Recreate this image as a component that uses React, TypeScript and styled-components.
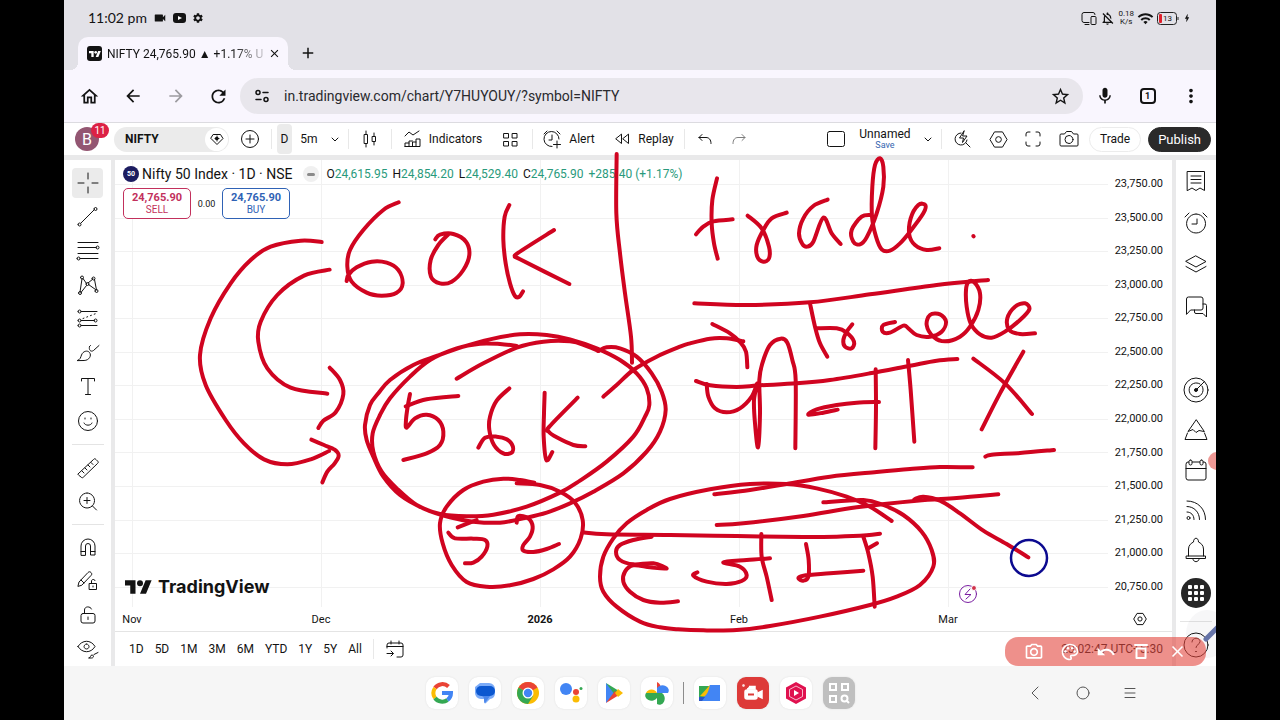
import React from "react";
import styled, { createGlobalStyle, css } from "styled-components";
import {
  MdVideocam,
  MdSettings,
  MdClose,
  MdAdd,
  MdOutlineHome,
  MdArrowBack,
  MdArrowForward,
  MdRefresh,
  MdStarBorder,
  MdMic,
  MdMoreVert,
  MdWifi,
  MdOutlineNotificationsOff,
  MdBolt,
  MdOutlinePalette,
  MdOutlineCameraAlt,
  MdUndo,
} from "react-icons/md";

const GlobalStyle = createGlobalStyle`
  * { box-sizing: border-box; }
  body { margin: 0; background: #000; font-family: Roboto, "Liberation Sans", sans-serif; color: #131313; }
  button { font: inherit; color: inherit; background: none; border: 0; padding: 0; cursor: pointer; }
  svg { display: block; flex: none; }
`;

/* ---------- shared ---------- */

const Icon = ({
  w,
  h = w,
  sw = 1,
  children,
}: {
  w: number;
  h?: number;
  sw?: number;
  children: React.ReactNode;
}) => (
  <svg
    width={w}
    height={h}
    viewBox={`0 0 ${w} ${h}`}
    fill="none"
    stroke="currentColor"
    strokeWidth={sw}
    strokeLinecap="round"
    strokeLinejoin="round"
    aria-hidden="true"
  >
    {children}
  </svg>
);

const Device = styled.div`
  position: relative;
  margin: 0 5%;
  min-height: 100vh;
  display: flex;
  flex-direction: column;
  overflow: hidden;
  background: #fff;
`;

/* ---------- status bar and tab strip ---------- */

const StatusBar = styled.div`
  display: flex;
  align-items: center;
  justify-content: space-between;
  height: 36px;
  padding: 0 24px;
  background: #e2e1e7;
`;

const Clock = styled.span`
  font: 14px/20px Lato, sans-serif;
`;

const StatusGroup = styled.div<{ $gap: number }>`
  display: flex;
  align-items: center;
  gap: ${(p) => p.$gap}px;
`;

const NetSpeed = styled.span`
  font-size: 8px;
  line-height: 8px;
  text-align: center;
`;

const TabStrip = styled.div`
  display: flex;
  height: 34px;
  padding-left: 14px;
  background: #e2e1e7;
`;

const Tab = styled.div`
  position: relative;
  display: flex;
  align-items: center;
  width: 210px;
  padding: 0 7px 0 9px;
  margin-top: 1px;
  border-radius: 10px 10px 0 0;
  background: #f9f6fe;
  &::before,
  &::after {
    content: "";
    position: absolute;
    bottom: 0;
    width: 8px;
    height: 8px;
  }
  &::before {
    left: -8px;
    background: radial-gradient(circle at 0 0, transparent 8px, #f9f6fe 8px);
  }
  &::after {
    right: -8px;
    background: radial-gradient(circle at 100% 0, transparent 8px, #f9f6fe 8px);
  }
`;

const Favicon = styled.span`
  display: grid;
  place-items: center;
  width: 15px;
  height: 15px;
  border-radius: 3px;
  background: #131313;
  color: #fff;
`;

const TabTitle = styled.span`
  flex: 1;
  margin: 0 4px 0 5px;
  white-space: nowrap;
  font-size: 12px;
  mask-image: linear-gradient(90deg, #000 80%, transparent 105%);
`;

const NewTab = styled.button`
  display: grid;
  place-items: center;
  width: 40px;
`;

/* ---------- address bar ---------- */

const AddressRow = styled.div`
  display: flex;
  align-items: center;
  height: 53px;
  padding: 0 4px;
  background: #f9f6fe;
  border-bottom: 1px solid #dcdbe0;
`;

const NavButton = styled.button<{ $muted?: boolean }>`
  display: grid;
  place-items: center;
  width: 43px;
  height: 40px;
  opacity: ${(p) => (p.$muted ? 0.4 : 1)};
`;

const Omnibox = styled.form`
  flex: 1;
  display: flex;
  align-items: center;
  height: 36px;
  padding: 0 12px 0 14px;
  border-radius: 18px;
  background: #e8e6ec;
`;

const UrlInput = styled.input`
  flex: 1;
  min-width: 0;
  margin-left: 14px;
  padding: 0;
  border: 0;
  outline: 0;
  background: none;
  color: #2a2a2e;
  font: 14px/20px Roboto, sans-serif;
`;

const TabCount = styled.span`
  display: grid;
  place-items: center;
  width: 16px;
  height: 16px;
  border: 2px solid #131313;
  border-radius: 4px;
  font-size: 9px;
  font-weight: 700;
`;

/* ---------- chart header ---------- */

const Header = styled.header`
  display: flex;
  align-items: center;
  height: 32px;
  font-size: 12px;
  background: #fff;
`;

const Slot = styled.button<{ $w: number; $muted?: boolean }>`
  display: flex;
  align-items: center;
  justify-content: center;
  width: ${(p) => p.$w}px;
  height: 30px;
  opacity: ${(p) => (p.$muted ? 0.55 : 1)};
`;

const LabelSlot = styled(Slot)`
  gap: 8px;
`;

const VLine = styled.span`
  width: 1px;
  height: 20px;
  background: #e8e8e8;
`;

const GroupLine = styled(VLine)`
  margin-left: 5px;
`;

const Avatar = styled.button`
  position: relative;
  width: 24px;
  height: 24px;
  margin: 0 15px 0 11px;
  border-radius: 50%;
  background: #935672;
  color: #fff;
  font-size: 16px;
`;

const Badge = styled.span`
  position: absolute;
  left: 16px;
  top: -4px;
  padding: 0 3px;
  min-width: 18px;
  border-radius: 8px;
  background: #dc2145;
  font-size: 10px;
  line-height: 15px;
`;

const SymbolSearch = styled.button`
  display: flex;
  align-items: center;
  justify-content: space-between;
  width: 115px;
  height: 25px;
  padding: 0 1px 0 11px;
  border-radius: 13px;
  background: #ebebeb;
  font-weight: 700;
`;

const RoundWhite = styled.span`
  display: grid;
  place-items: center;
  width: 23px;
  height: 23px;
  border-radius: 50%;
  background: #fff;
`;

const Interval = styled(Slot)`
  background: #ebebeb;
  border-radius: 4px;
  margin-left: 5px;
`;

const Spacer = styled.span`
  flex: 1;
`;

const LayoutName = styled.button`
  width: 60px;
  line-height: 12px;
  text-align: center;
  small {
    display: block;
    font-size: 9px;
    line-height: 10px;
    color: #3465b0;
  }
`;

const Pill = styled.button<{ $dark?: boolean }>`
  height: 25px;
  padding: 0 ${(p) => (p.$dark ? 9 : 10)}px;
  margin-right: ${(p) => (p.$dark ? 5 : 7)}px;
  border-radius: 13px;
  border: 1px solid ${(p) => (p.$dark ? "#2a2a2a" : "#ececec")};
  background: ${(p) => (p.$dark ? "#2a2a2a" : "#fff")};
  color: ${(p) => (p.$dark ? "#fff" : "#131313")};
  font-size: ${(p) => (p.$dark ? 13 : 12)}px;
`;

/* ---------- work area ---------- */

const Work = styled.main`
  flex: 1;
  display: flex;
  gap: 4px;
  padding-top: 5px;
  background: #e9e9ea;
`;

const sideBar = css`
  display: flex;
  flex-direction: column;
  align-items: center;
  background: #fff;
`;

const DrawBar = styled.nav`
  ${sideBar}
  width: 47px;
  padding-top: 6px;
`;

const Tool = styled.button<{ $active?: boolean }>`
  display: grid;
  place-items: center;
  width: 31px;
  height: 30px;
  margin: 2px 0;
  border-radius: 4px;
  background: ${(p) => (p.$active ? "#ebebeb" : "none")};
`;

const HLine = styled.span<{ $m: number }>`
  width: 32px;
  height: 1px;
  margin: ${(p) => p.$m}px 0;
  background: #e4e4e4;
`;

const WidgetBar = styled.nav`
  ${sideBar}
  width: 40px;
`;

const Widget = styled.button<{ $h: number; $gap?: number }>`
  display: grid;
  place-items: center;
  width: 40px;
  height: ${(p) => p.$h}px;
  margin-top: ${(p) => p.$gap ?? 0}px;
`;

const AppsDot = styled.span`
  display: grid;
  place-items: center;
  width: 30px;
  height: 30px;
  border-radius: 50%;
  background: #262626;
`;

const ChartPanel = styled.section`
  flex: 1;
  min-width: 0;
  display: flex;
  flex-direction: column;
  background: #fff;
`;

const PlotRow = styled.div`
  flex: 1;
  display: flex;
`;

const Plot = styled.div`
  position: relative;
  flex: 1;
  display: flex;
  flex-direction: column;
  justify-content: space-between;
  padding: 4px 9px 8px 8px;
`;

const GridLines = styled.svg`
  position: absolute;
  inset: 0;
  width: 100%;
  height: 100%;
`;

const Legend = styled.div`
  position: relative;
`;

const LegendRow = styled.div`
  display: flex;
  align-items: center;
  height: 20px;
  font-size: 12px;
  white-space: nowrap;
`;

const IndexLogo = styled.span`
  display: grid;
  place-items: center;
  width: 16px;
  height: 16px;
  margin-right: 3px;
  border-radius: 50%;
  background: #1c1c60;
  color: #fff;
  font-size: 7px;
  font-weight: 700;
`;

const SymbolTitle = styled.span`
  font-size: 14px;
`;

const StatusPill = styled.span`
  display: grid;
  place-items: center;
  width: 16px;
  height: 16px;
  margin: 0 7px 0 11px;
  border-radius: 8px;
  background: #f0f0f0;
  &::after {
    content: "";
    width: 8px;
    height: 3px;
    border-radius: 2px;
    background: #8a8a8a;
  }
`;

const Ohlc = styled.span`
  margin-right: 5px;
  b {
    font-weight: 400;
    color: #299a7c;
  }
`;

const OrderRow = styled.div`
  display: flex;
  align-items: center;
  margin-top: 4px;
`;

const OrderButton = styled.button<{ $color: string }>`
  width: 68px;
  height: 31px;
  border: 1px solid ${(p) => p.$color};
  border-radius: 5px;
  background: #fff;
  color: ${(p) => p.$color};
  font-size: 10px;
  line-height: 12px;
  strong {
    display: block;
    font-size: 11px;
  }
`;

const Spread = styled.span`
  width: 31px;
  text-align: center;
  font-size: 9px;
`;

const Brand = styled.div`
  position: relative;
  display: flex;
  align-items: center;
  gap: 6px;
  height: 24px;
  padding-left: 2px;
  font: 700 18px/24px Inter, sans-serif;
`;

const PriceAxis = styled.div`
  display: flex;
  flex-direction: column;
  justify-content: space-between;
  width: 64px;
  padding: 16px 9px 12px 0;
  text-align: right;
  font-size: 11px;
  line-height: 16px;
`;

const TimeRow = styled.div`
  display: flex;
  align-items: center;
  height: 25px;
  border-bottom: 1px solid #e4e4e4;
  font-size: 11px;
`;

const TimeAxis = styled.div`
  flex: 1;
  display: grid;
  grid-template-columns: 34fr 344fr 94fr 304fr 114fr 103fr;
  text-align: center;
`;

const AxisSettings = styled.button`
  display: grid;
  place-items: center;
  width: 64px;
`;

const RangeBar = styled.div`
  display: flex;
  align-items: center;
  gap: 11px;
  height: 34px;
  padding: 0 9px 0 14px;
  font-size: 12px;
`;

const RangeDivider = styled(VLine)`
  margin-right: 1px;
`;

/* ---------- floating screen recorder controls ---------- */

const RecorderBar = styled.div`
  position: absolute;
  right: 10px;
  bottom: 54px;
  display: flex;
  align-items: center;
  justify-content: space-between;
  width: 201px;
  height: 29px;
  padding: 0 19px;
  border-radius: 13px;
  background: rgba(226, 70, 62, 0.6);
  color: #fff;
`;

const RecorderButton = styled.button`
  display: grid;
  place-items: center;
  width: 20px;
  height: 24px;
`;

const EdgeHandle = styled.span`
  position: absolute;
  right: -10px;
  bottom: 250px;
  width: 18px;
  height: 18px;
  border-radius: 50%;
  background: rgba(226, 70, 62, 0.55);
`;

const PenHandle = styled.span`
  position: absolute;
  right: -12px;
  bottom: 62px;
  width: 42px;
  height: 48px;
  border-radius: 50%;
  background: rgba(120, 120, 140, 0.06);
`;

const EventFlag = styled.span`
  position: absolute;
  right: 238px;
  bottom: 116px;
  color: #7b1fa2;
`;

const Ink = styled.svg`
  position: absolute;
  inset: 0;
  width: 100%;
  height: 100%;
  pointer-events: none;
`;

/* ---------- system dock ---------- */

const Dock = styled.footer`
  display: grid;
  grid-template-columns: 1fr auto 1fr;
  align-items: center;
  height: 54px;
  background: #f6f6f6;
`;

const Apps = styled.div`
  grid-column: 2;
  display: flex;
  align-items: center;
  gap: 11px;
`;

const AppTile = styled.button<{ $bg?: string }>`
  display: grid;
  place-items: center;
  width: 32px;
  height: 32px;
  border-radius: 9px;
  background: ${(p) => p.$bg ?? "#fff"};
  box-shadow: 0 0 2px rgba(0, 0, 0, 0.1);
`;

const DockDivider = styled.span`
  width: 1px;
  height: 22px;
  margin: 0 -1px;
  background: #8c8c8c;
`;

const SystemNav = styled.div`
  display: flex;
  justify-content: flex-end;
  padding-right: 63px;
  color: #555;
`;

/* ---------- icons ---------- */

const TvMark = ({ w, h }: { w: number; h: number }) => (
  <svg width={w} height={h} viewBox="0 4 36 18" fill="currentColor" aria-hidden="true">
    <path d="M14 22H7V11H0V4h14v18zM28 22h-8l7.5-18h8L28 22z" />
    <circle cx="20" cy="8" r="4" />
  </svg>
);

const Hex = ({ s }: { s: number }) => (
  <svg width={s} height={s} viewBox="0 0 20 20" fill="none" stroke="currentColor" strokeWidth={20 / s} aria-hidden="true">
    <path d="M5.8 2h8.4L19 10l-4.8 8H5.8L1 10z" strokeLinejoin="round" />
    <circle cx="10" cy="10" r="3" />
  </svg>
);

const Chevron = () => (
  <Icon w={10}>
    <path d="M2 4l3 3 3-3" />
  </Icon>
);

const drawTools: [string, React.ReactNode][] = [
  ["Trend line", <path d="M5 18L18 5M2 19.500a1.500 1.500 0 1 0 3 0a1.500 1.500 0 1 0-3 0M18 4a1.500 1.500 0 1 0 3 0a1.500 1.500 0 1 0-3 0" />],
  ["Fib retracement", <path d="M2 3.500h20M2 8.500h18M2 14.500h20M4 19.500h18M20 8.500a1.500 1.500 0 1 0 3 0a1.500 1.500 0 1 0-3 0M1 19.500a1.500 1.500 0 1 0 3 0a1.500 1.500 0 1 0-3 0" />],
  ["Patterns", <path d="M4 19L6 6M7 5.500l3.500 5M12 10l5-4M18.500 6.500l2 10.500M5 19.500l5.500-7M12.500 11.500l7 5M4.500 4.500a1.500 1.500 0 1 0 3 0a1.500 1.500 0 1 0-3 0M16 5.500a1.500 1.500 0 1 0 3 0a1.500 1.500 0 1 0-3 0M10 11a1.500 1.500 0 1 0 3 0a1.500 1.500 0 1 0-3 0M2.500 20a1.500 1.500 0 1 0 3 0a1.500 1.500 0 1 0-3 0M19 18a1.500 1.500 0 1 0 3 0a1.500 1.500 0 1 0-3 0" />],
  ["Projection", <><path d="M5 4.500h16M5 13.500h13M5 18.500h16M2 4.500a1.500 1.500 0 1 0 3 0a1.500 1.500 0 1 0-3 0M2 13.500a1.500 1.500 0 1 0 3 0a1.500 1.500 0 1 0-3 0M18 13.500a1.500 1.500 0 1 0 3 0a1.500 1.500 0 1 0-3 0M2 18.500a1.500 1.500 0 1 0 3 0a1.500 1.500 0 1 0-3 0" /><path d="M7 11.500l13-5" strokeDasharray="1 3" /></>],
  ["Brush", <path d="M1.500 19.500c3-1 3-3 4-5.500 1.500-4 6-5 8-2.500 2.500 3-.5 8-5 8zM13.500 5.500c-1 3 1 6 4 4l5.500-5M13.500 5.500l1-1" />],
  ["Text", <path d="M5.500 6V3.500h13V6M12 3.500v16M9.500 19.500h5" />],
  ["Emoji", <><circle cx="12" cy="12" r="9.500" /><path d="M8 14c1 3 7 3 8 0M9 9v1M15 9v1" /></>],
];

const zoomTools: [string, React.ReactNode][] = [
  ["Measure", <path d="M2.500 17.500L17.500 3.500c1-1 1.500-1 2.500 0l1.500 1.500c1 1 1 1.500 0 2.500L7.500 21c-1 1-1.500 1-2.500 0l-2.500-2c-1-1-1-1 0-1.500zM6 15l2 2M9 12l2 2M12 9l2 2M15 6.500l2 2" />],
  ["Zoom in", <path d="M11 3a7.500 7.500 0 1 0 .1 0M11 7.500v6M8 10.500h6M16.500 16l4 4" />],
];

const lockTools: [string, React.ReactNode][] = [
  ["Magnet", <path d="M5 20V11a7 7 0 0 1 14 0v9h-4.500v-9a2.500 2.500 0 0 0-5 0v9zM5 16.500h4.500M14.500 16.500H19" />],
  ["Keep drawing", <path d="M2 17l1-4L12 3.500c1-1 2-1 3 0 1 1 1 2 0 3L6 16zM5 11l3 3M13.500 14.500h7v6h-7zM15.500 14.500V12c0-2 3.500-2 3.500-.500M17 17v1" />],
  ["Lock drawings", <path d="M7 10.500h10a2 2 0 0 1 2 2V18a2 2 0 0 1-2 2H7a2 2 0 0 1-2-2v-5.500a2 2 0 0 1 2-2zM8.500 10.500V7c0-4 6-4 7-1M12 14v2.500" />],
  ["Hide drawings", <path d="M2 9.500c4-7 13-7 17 0-4 7-13 7-17 0zM10.500 7a2.500 2.500 0 1 0 .1 0M13 21c2 0 1-3 3-3s2 3 0 3zM18 17.500l4-2" />],
];

const ToolIcon = ({ children }: { children: React.ReactNode }) => <Icon w={24}>{children}</Icon>;

/* ---------- ink: pen samples are recorded at three units per pixel ---------- */

type Sheet = { x: number; y: number; strokes: string[] };

const sheets: Sheet[] = [
  {
    x: 64,
    y: 155,
    strokes: [
      "773,261 710,257 620,275 560,315 500,385 440,490 408,600 425,690 485,795 540,865 600,913 670,928 740,913 795,888",
      "742,854 780,870 812,884 824,902 812,925 790,950 775,982",
      "797,344 720,362 640,420 590,500 583,560 610,640 680,698 790,716",
      "797,638 828,675 838,718 815,772 778,797 763,819",
    ],
  },
  {
    x: 340,
    y: 180,
    strokes: [
      "176,67 130,90 70,150 30,210 22,260 35,305 80,338 125,347 170,338 188,310 175,270 140,248 95,245 50,262 25,285 20,303",
      "286,178 300,164 340,162 378,185 388,225 370,270 335,305 300,310 273,290 272,240 295,195 325,163",
      "508,75 494,110 490,180 497,250 510,310 525,348 538,350 549,334",
      "642,150 535,218 528,230 540,238 688,312",
      "830,-78 829,100 840,220 855,340 873,470 876,548",
      "350,596 430,550 530,503 610,485 690,484 740,498 775,513",
      "775,513 800,502 840,505 890,530 935,580 965,635 977,690 960,755 920,815 850,880 760,935 690,970 620,998 550,1015 480,1028 400,1025 330,1012 250,985 180,945 130,890 100,830 80,780 75,735 90,675 115,640 150,600 220,555 290,528 370,500 450,478 540,463 620,465 690,478 770,505 840,540 890,580 920,625 928,675 915,710 880,770 800,845 720,902 660,938 560,980 460,1004 380,1009 300,1002 230,975 170,925 125,875 100,815 98,760 120,705 150,655 210,590 270,540 350,505 420,491 480,492 530,498",
      "790,650 830,615 880,570 950,530 1020,500 1050,490 1110,476 1160,475 1210,484",
    ],
  },
  {
    x: 340,
    y: 380,
    strokes: [
      "210,42 203,80 198,120 200,143 225,115 260,104 295,120 310,155 300,195 260,220 190,240",
      "197,79 260,58 355,48",
      "508,25 470,62 450,110 448,150 462,195 490,220 515,218 518,198 500,178 470,170 435,173 415,203",
      "614,38 612,100 611,170 619,240 637,216",
      "713,53 628,140 626,155 650,172 700,195 736,199",
      "530,310 600,315 660,335 705,368 728,420 722,475 690,530 640,568 580,597 510,616 440,620 380,606 335,555 308,490 300,430 320,380 370,330 430,305 490,296 540,300 583,308",
      "325,458 345,475 400,476 435,480 442,500 425,530 400,548 375,550",
      "353,442 410,420",
      "530,428 535,408 565,415 578,440 570,470 550,495 550,512 580,516 620,507 657,492",
      "728,457 800,463 990,465 1190,468 1390,471 1490,470 1580,466 1620,461",
      "935,470 880,480 840,495 828,515 840,540 880,553 940,550 980,566 930,562 880,556 855,575 850,605 870,635 910,660 960,668 1014,664",
      "1655,423 1590,380 1520,350 1430,325 1340,312 1230,312 1110,328 990,357 920,390 860,430 820,475 790,530 780,590 790,635 830,680 900,725 960,742 1014,748 1090,751 1190,750 1290,738 1440,710 1590,675 1670,650 1740,615 1780,560 1775,510 1745,455 1690,405 1630,375 1570,360 1450,367",
    ],
  },
  {
    x: 670,
    y: 150,
    strokes: [
      "127,522 180,550 212,578 228,605 232,652",
      "141,85 127,150 125,220 132,280 143,326",
      "78,253 100,230 130,214 188,208",
      "233,197 275,235 297,290 297,325 280,335 262,320 260,285 280,240 305,205 350,188",
      "473,149 430,168 400,205 387,250 397,282 412,290 430,275 460,203 485,250 512,282",
      "605,195 575,200 545,240 550,275 570,283 590,262 620,190 640,110 640,50 630,25 615,45 607,110 606,200 618,260 635,298 660,302 690,280 720,245 760,190 766,165 745,165 722,205 718,255 735,285 770,300 808,295",
      "73,460 230,465 420,457 600,433 800,405 954,390",
      "910,258 911,259",
      "420,460 435,530 450,580 472,620",
      "440,535 500,535 530,548 552,575 545,595 525,590 520,570 530,545 547,523",
      "675,516 640,525 638,545 660,548 700,527 715,535 740,555 780,560 815,545 828,515 810,493 780,495 770,525 790,560 825,574 870,560 900,530 925,480 930,430 912,396 895,396 888,420 890,470 902,520 930,553 965,563 1005,545 1050,510 1078,478 1065,460 1035,470 1012,505 1018,540 1050,552 1095,550",
      "78,693 120,706 200,711 270,706 380,700 480,690 600,670 720,647 800,632 862,627",
    ],
  },
  {
    x: 670,
    y: 380,
    strokes: [
      "110,12 115,50 135,85 170,97 210,85 245,50 262,10 252,60 255,130 264,202 270,100 268,0 277,-50 300,-105 332,-124 352,-112 367,-60 377,0 376,205",
      "503,89 460,98 415,104 440,88 500,75 560,68 627,66",
      "617,-32 618,80 616,205",
      "714,-60 722,30 733,185",
      "1086,102 1005,10 910,-64",
      "935,148 990,40 1060,-85",
      "946,230 965,224 1050,219 1152,210",
      "133,343 240,330 350,312 480,290 620,276 720,267 810,261 908,262",
      "140,435 220,430 400,408 560,382 740,362 860,354 985,343",
      "733,358 760,350 810,362 870,400 940,452 1010,492 1075,532",
      "82,577 70,587 110,605 170,612 215,603 230,585 210,560 160,547 230,540 300,535",
      "274,462 275,530 290,590 305,660",
      "408,492 416,540 415,590 400,602 385,595 400,587 480,580 580,572",
      "580,470 595,520 608,590 614,680",
      "595,505 621,490",
    ],
  },
];

const smooth = (samples: string) => {
  const p = samples.split(" ").map((s) => s.split(",").map(Number));
  let d = `M${p[0][0]} ${p[0][1]}`;
  for (let i = 0; i < p.length - 1; i++) {
    const a = p[i - 1] ?? p[i];
    const b = p[i];
    const c = p[i + 1];
    const e = p[i + 2] ?? c;
    d += `C${b[0] + (c[0] - a[0]) / 6} ${b[1] + (c[1] - a[1]) / 6} ${c[0] - (e[0] - b[0]) / 6} ${c[1] - (e[1] - b[1]) / 6} ${c[0]} ${c[1]}`;
  }
  return d;
};

const InkLayer = () => (
  <Ink viewBox="64 0 1152 720" preserveAspectRatio="none" fill="none" strokeLinecap="round" strokeLinejoin="round" aria-hidden="true">
    {sheets.map((s, i) => (
      <g key={i} transform={`translate(${s.x} ${s.y}) scale(${1 / 3})`} stroke="#d00420" strokeWidth="12">
        {s.strokes.map((k, j) => (
          <path key={j} d={smooth(k)} />
        ))}
      </g>
    ))}
    <circle cx="1029" cy="558" r="18" stroke="#0c0a90" strokeWidth="2.5" />
    <path d="M1206 639L1218 627" stroke="#6674a8" strokeWidth="5" />
  </Ink>
);

/* ---------- page ---------- */

const prices = Array.from({ length: 13 }, (_, i) =>
  (23750 - i * 250).toLocaleString("en-US", { minimumFractionDigits: 2 })
);
const months = ["Nov", "Dec", "2026", "Feb", "Mar"];
const monthX = [17, 206, 425, 624, 833];
const ranges = ["1D", "5D", "1M", "3M", "6M", "YTD", "1Y", "5Y", "All"];
const ohlc = [
  ["O", "24,615.95"],
  ["H", "24,854.20"],
  ["L", "24,529.40"],
  ["C", "24,765.90"],
  ["", "+285.40 (+1.17%)"],
];

const BrowserChrome = () => (
  <>
    <StatusBar>
      <StatusGroup $gap={6}>
        <Clock>11:02 pm</Clock>
        <MdVideocam size={14} />
        <svg width="13" height="10" viewBox="0 0 13 10">
          <rect width="13" height="10" rx="3" fill="#131313" />
          <path d="M5 3v4l4-2z" fill="#fff" />
        </svg>
        <MdSettings size={12} />
      </StatusGroup>
      <StatusGroup $gap={3}>
        <Icon w={16} h={14}>
          <path d="M8 11.500H3a2 2 0 0 1-2-2v-6a2 2 0 0 1 2-2h9a2 2 0 0 1 2 2M4 13.500h4M11 5.500h3a1 1 0 0 1 1 1v6a1 1 0 0 1-1 1h-3a1 1 0 0 1-1-1v-6a1 1 0 0 1 1-1z" />
        </Icon>
        <MdOutlineNotificationsOff size={15} />
        <NetSpeed>
          0.18
          <br />
          K/s
        </NetSpeed>
        <MdWifi size={17} />
        <svg width="22" height="13" viewBox="0 0 22 13">
          <rect x=".5" y=".5" width="19" height="12" rx="3" fill="none" stroke="#222" />
          <rect x="2" y="2" width="3" height="9" rx="1" fill="#e0202c" />
          <path d="M21 5v3" stroke="#222" />
          <text x="6" y="9" fontSize="8" fontFamily="Roboto" fill="#131313">13</text>
        </svg>
        <MdBolt size={10} />
      </StatusGroup>
    </StatusBar>
    <TabStrip>
      <Tab>
        <Favicon>
          <TvMark w={12} h={6} />
        </Favicon>
        <TabTitle>NIFTY 24,765.90 ▲ +1.17% U</TabTitle>
        <button aria-label="Close tab">
          <MdClose size={13} />
        </button>
      </Tab>
      <NewTab aria-label="New tab">
        <MdAdd size={18} />
      </NewTab>
    </TabStrip>
    <AddressRow>
      <NavButton aria-label="Home"><MdOutlineHome size={21} /></NavButton>
      <NavButton aria-label="Back"><MdArrowBack size={20} /></NavButton>
      <NavButton aria-label="Forward" $muted><MdArrowForward size={20} /></NavButton>
      <NavButton aria-label="Reload"><MdRefresh size={21} /></NavButton>
      <Omnibox>
        <Icon w={16} sw={1.5}>
          <circle cx="4" cy="4.500" r="2" />
          <path d="M9 4.500h5M2 11.500h5" />
          <circle cx="12" cy="11.500" r="2" />
        </Icon>
        <UrlInput aria-label="Address" defaultValue="in.tradingview.com/chart/Y7HUYOUY/?symbol=NIFTY" />
        <MdStarBorder size={21} />
      </Omnibox>
      <NavButton aria-label="Voice search"><MdMic size={20} /></NavButton>
      <NavButton aria-label="Open tabs"><TabCount>1</TabCount></NavButton>
      <NavButton aria-label="Menu"><MdMoreVert size={22} /></NavButton>
    </AddressRow>
  </>
);

const ChartHeader = () => (
  <Header>
    <Avatar aria-label="Account">
      B<Badge>11</Badge>
    </Avatar>
    <SymbolSearch>
      NIFTY
      <RoundWhite>
        <Icon w={14}>
          <path d="M3.500 2.500h7l2.500 4-6 6-6-6zM7 4v5M5 6.500h4M6 5.500h2v2H6z" />
        </Icon>
      </RoundWhite>
    </SymbolSearch>
    <Slot $w={42} aria-label="Compare">
      <Icon w={18}>
        <circle cx="9" cy="9" r="8.500" />
        <path d="M9 5v8M5 9h8" />
      </Icon>
    </Slot>
    <VLine />
    <Interval $w={15}>D</Interval>
    <Slot $w={34}>5m</Slot>
    <Slot $w={17} aria-label="Intervals"><Chevron /></Slot>
    <GroupLine />
    <Slot $w={42} aria-label="Chart type">
      <Icon w={14} h={18}>
        <path d="M1.500 4.500h3v9h-3zM3 1v3M3 14v3M9.500 6.500h3v5h-3zM11 3v3M11 12v3" />
      </Icon>
    </Slot>
    <VLine />
    <LabelSlot $w={102}>
      <Icon w={17} h={18}>
        <path d="M1 6l4-4 4 3 6-4M1 16.500h15V9h-4v7M12 12H8.500v4M8.500 11H5v5M5 13H1v3.500" />
      </Icon>
      Indicators
    </LabelSlot>
    <Slot $w={33} aria-label="Templates">
      <Icon w={15}>
        <path d="M1 1.500h4.500V6H1zM9.500 1.500H14V6H9.500zM1 9.500h4.500V14H1zM9.500 9.500H14V14H9.500z" />
      </Icon>
    </Slot>
    <GroupLine />
    <LabelSlot $w={72}>
      <Icon w={18} h={19}>
        <path d="M9 16.500A7.500 7.500 0 1 1 16 9M9 5v5H6M1 4l3-3M17 4l-3-3M14 11v7M10.500 14.500h7" />
      </Icon>
      Alert
    </LabelSlot>
    <LabelSlot $w={79}>
      <Icon w={15} h={12}>
        <path d="M6.500 1.500v9L1 6zM13.500 1.500v9L8 6z" />
      </Icon>
      Replay
    </LabelSlot>
    <VLine />
    <Slot $w={40} aria-label="Undo">
      <Icon w={14} h={12}>
        <path d="M4 1.500L1 4.500l3 3M1 4.500h7c3 0 5 2 5 6" />
      </Icon>
    </Slot>
    <Slot $w={28} $muted aria-label="Redo">
      <Icon w={14} h={12}>
        <path d="M10 1.500l3 3-3 3M13 4.500H6c-3 0-5 2-5 6" />
      </Icon>
    </Slot>
    <Spacer />
    <Slot $w={38} aria-label="Layout setup">
      <Icon w={18} h={16}>
        <rect x=".5" y=".5" width="17" height="15" rx="2" />
      </Icon>
    </Slot>
    <LayoutName>
      Unnamed<small>Save</small>
    </LayoutName>
    <Slot $w={26} aria-label="Manage layouts"><Chevron /></Slot>
    <VLine />
    <Slot $w={40} aria-label="Quick search">
      <Icon w={18}>
        <path d="M8 3a6 6 0 1 0 6 7M13 13l4 4M11 1L6.500 8h4l-1 4.500L14 6h-4z" />
      </Icon>
    </Slot>
    <Slot $w={34} aria-label="Settings"><Hex s={19} /></Slot>
    <Slot $w={34} aria-label="Fullscreen">
      <Icon w={16}>
        <path d="M1 5V3a2 2 0 0 1 2-2h2M11 1h2a2 2 0 0 1 2 2v2M15 11v2a2 2 0 0 1-2 2h-2M5 15H3a2 2 0 0 1-2-2v-2" />
      </Icon>
    </Slot>
    <Slot $w={39} aria-label="Snapshot">
      <Icon w={20} h={18}>
        <path d="M1 5a1 1 0 0 1 1-1h3.500l2-2.500h5l2 2.500H18a1 1 0 0 1 1 1v10a1 1 0 0 1-1 1H2a1 1 0 0 1-1-1z" />
        <circle cx="10" cy="9.500" r="4" />
      </Icon>
    </Slot>
    <Pill>Trade</Pill>
    <Pill $dark>Publish</Pill>
  </Header>
);

const tools = (list: [string, React.ReactNode][]) =>
  list.map(([name, path]) => (
    <Tool key={name} aria-label={name}>
      <ToolIcon>{path}</ToolIcon>
    </Tool>
  ));

const DrawingToolbar = () => (
  <DrawBar>
    <Tool $active aria-label="Cross">
      <ToolIcon>
        <path d="M12 2v6M12 16v6M2 12h6M16 12h6" />
      </ToolIcon>
    </Tool>
    {tools(drawTools)}
    <HLine $m={6} />
    {tools(zoomTools)}
    <HLine $m={5} />
    {tools(lockTools)}
  </DrawBar>
);

const Widgets = () => (
  <WidgetBar>
    <Widget $h={42} aria-label="Watchlist">
      <Icon w={20} h={22}>
        <path d="M1.500 1.500h17v19L14 18l-4 2.500L6 18l-4.500 2.500zM5 6h10M5 9.500h10M5 13h10" />
      </Icon>
    </Widget>
    <Widget $h={42} aria-label="Alerts">
      <Icon w={24}>
        <path d="M12 3a9.500 9.500 0 1 0 .1 0M13 8v5H8M1 6l4-4M23 6l-4-4" />
      </Icon>
    </Widget>
    <Widget $h={40} aria-label="Object tree">
      <Icon w={22} h={18}>
        <path d="M11 1l10 5.500L11 12 1 6.500zM1 11.500L11 17l10-5.500" />
      </Icon>
    </Widget>
    <Widget $h={44} aria-label="Chats">
      <Icon w={23} h={23}>
        <path d="M1.500 19V4a2 2 0 0 1 2-2H16a2 2 0 0 1 2 2v9a2 2 0 0 1-2 2H6zM18 9h2a1.500 1.500 0 0 1 1.500 1.500V22L18 18.500H11a1.500 1.500 0 0 1-1.500-1.500v-2" />
      </Icon>
    </Widget>
    <Widget $h={40} $gap={42} aria-label="Screener">
      <Icon w={26}>
        <circle cx="13" cy="13" r="12" />
        <path d="M17 7a7 7 0 1 0 2 2M13 13l8.500-8.500" />
        <circle cx="13" cy="13" r="1.500" fill="currentColor" />
      </Icon>
    </Widget>
    <Widget $h={40} aria-label="Ideas">
      <Icon w={24} h={22}>
        <path d="M12 1L4 12.500l5-2 3 3 3-2 5 1zM3.500 14L1 20.500h22L20.500 14" />
      </Icon>
    </Widget>
    <Widget $h={40} aria-label="Calendar">
      <Icon w={22} h={22}>
        <path d="M1 5a2 2 0 0 1 2-2h16a2 2 0 0 1 2 2v14a2 2 0 0 1-2 2H3a2 2 0 0 1-2-2zM1 9.500h20" />
        <rect x="4" y="1" width="3" height="5" rx="1.5" fill="#fff" />
        <rect x="15" y="1" width="3" height="5" rx="1.5" fill="#fff" />
      </Icon>
    </Widget>
    <Widget $h={40} aria-label="News">
      <Icon w={22} h={22}>
        <circle cx="3.500" cy="19" r="1.500" />
        <path d="M2 13c4 0 7 3 7 7.500M2 7.500c7 0 12.500 5.500 12.500 13M2 2c11 0 18.500 8 18.500 18.500" />
      </Icon>
    </Widget>
    <Widget $h={40} aria-label="Notifications">
      <Icon w={22} h={26}>
        <path d="M3.500 19v-7c0-4 3-6 5-7 0-5 5-5 5 0 2 1 5 3 5 7v7M1.500 19h19v2.500h-19zM8 22.500c1 3 5 3 6 0" />
      </Icon>
    </Widget>
    <Widget $h={46} aria-label="Apps">
      <AppsDot>
        <svg width="17" height="17" viewBox="0 0 17 17" fill="#fff">
          {[0, 6, 12].map((y) => [0, 6, 12].map((x) => <rect key={`${x}${y}`} x={x} y={y} width="4" height="4" rx="1" />))}
        </svg>
      </AppsDot>
    </Widget>
    <HLine $m={5} />
    <Widget $h={36} aria-label="Help">
      <Icon w={26}>
        <circle cx="13" cy="13" r="12" />
        <path d="M9 10c0-5 8-5 8-.500 0 3-4 3-4 6M12.500 19.500h1" />
      </Icon>
    </Widget>
  </WidgetBar>
);

const Chart = () => (
  <ChartPanel>
    <PlotRow>
      <Plot>
        <GridLines viewBox="0 0 993 447" preserveAspectRatio="none" stroke="#f1f1f1" aria-hidden="true">
          {prices.map((p, i) => (
            <path key={p} d={`M0 ${Math.round(24 + i * 33.55)}.5H993`} />
          ))}
          {monthX.map((x) => (
            <path key={x} d={`M${x}.5 0V447`} />
          ))}
        </GridLines>
        <Legend>
          <LegendRow>
            <IndexLogo>50</IndexLogo>
            <SymbolTitle>Nifty 50 Index · 1D · NSE</SymbolTitle>
            <StatusPill />
            {ohlc.map(([k, v]) => (
              <Ohlc key={v}>
                {k}
                <b>{v}</b>
              </Ohlc>
            ))}
          </LegendRow>
          <OrderRow>
            <OrderButton $color="#c2305c"><strong>24,765.90</strong>SELL</OrderButton>
            <Spread>0.00</Spread>
            <OrderButton $color="#2f62b5"><strong>24,765.90</strong>BUY</OrderButton>
          </OrderRow>
        </Legend>
        <Brand>
          <TvMark w={27} h={14} />
          TradingView
        </Brand>
      </Plot>
      <PriceAxis>
        {prices.map((p) => (
          <span key={p}>{p}</span>
        ))}
      </PriceAxis>
    </PlotRow>
    <TimeRow>
      <TimeAxis>
        {months.map((m) => (m === "2026" ? <b key={m}>{m}</b> : <span key={m}>{m}</span>))}
      </TimeAxis>
      <AxisSettings aria-label="Axis settings"><Hex s={14} /></AxisSettings>
    </TimeRow>
    <RangeBar>
      {ranges.map((r) => (
        <button key={r}>{r}</button>
      ))}
      <RangeDivider />
      <button aria-label="Go to date">
        <Icon w={18}>
          <path d="M1 8V5a2 2 0 0 1 2-2h12a2 2 0 0 1 2 2v10a2 2 0 0 1-2 2h-4M1 6.500h16M5 1v3M13 1v3M1 13.500h6M5 11l2.500 2.500L5 16" />
        </Icon>
      </button>
      <Spacer />
      <span>23:02:47 UTC+5:30</span>
    </RangeBar>
  </ChartPanel>
);

const SystemDock = () => (
  <Dock>
    <Apps>
      <AppTile aria-label="Google">
        <svg width="24" height="24" viewBox="0 0 24 24" fill="none" strokeWidth="4">
          <path d="M18.500 5.500A9 9 0 0 0 5 7" stroke="#ea4335" />
          <path d="M5 7a9 9 0 0 0 0 10" stroke="#fbbc04" />
          <path d="M5 17a9 9 0 0 0 12.500 2" stroke="#34a853" />
          <path d="M17.500 19A9 9 0 0 0 21 12h-9" stroke="#4285f4" />
        </svg>
      </AppTile>
      <AppTile aria-label="Messages">
        <svg width="24" height="24" viewBox="0 0 24 24">
          <path d="M7 2h9a6 6 0 0 1 6 6v5a6 6 0 0 1-5 5l-4 4c-1 1-2 0-2-1v-3H8a6 6 0 0 1-6-6V6z" fill="#7babf8" />
          <rect x="3" y="5" width="19" height="10" rx="5" fill="#0b57d0" />
          <path d="M9 15h8l-5 7c-1-1-1-3-1-5z" fill="#4a86ea" />
        </svg>
      </AppTile>
      <AppTile aria-label="Chrome">
        <svg width="24" height="24" viewBox="0 0 24 24">
          <circle cx="12" cy="12" r="11" fill="#fbbc04" />
          <path d="M12 12L2.500 6.500a11 11 0 0 1 19 0z" fill="#ea4335" />
          <path d="M12 12L2.500 6.500A11 11 0 0 0 12 23l5-8z" fill="#34a853" />
          <circle cx="12" cy="12" r="5.500" fill="#fff" />
          <circle cx="12" cy="12" r="4.200" fill="#4285f4" />
        </svg>
      </AppTile>
      <AppTile aria-label="Assistant">
        <svg width="24" height="24" viewBox="0 0 24 24">
          <circle cx="7" cy="8" r="6" fill="#4285f4" />
          <circle cx="17" cy="11" r="3" fill="#ea4335" />
          <circle cx="17" cy="18" r="3.500" fill="#fbbc04" />
          <circle cx="22" cy="7.500" r="1.500" fill="#34a853" />
        </svg>
      </AppTile>
      <AppTile aria-label="Play Store">
        <svg width="24" height="24" viewBox="0 0 24 24">
          <path d="M4 2v20l11-10z" fill="#4285f4" />
          <path d="M4 2l9 12 4-4z" fill="#34a853" />
          <path d="M4 22l13-8-4-4z" fill="#ea4335" />
          <path d="M16 8l5 4-5 4-3-4z" fill="#fbbc04" />
        </svg>
      </AppTile>
      <AppTile aria-label="Photos">
        <svg width="24" height="24" viewBox="0 0 24 24">
          <path d="M12 12V1a6 6 0 0 1 0 11z" fill="#ea4335" />
          <path d="M12 12V7a6 5 0 0 1 11 5z" fill="#4285f4" />
          <path d="M12 12h5a5 6 0 0 1-5 11z" fill="#34a853" />
          <path d="M12 12v5A6 5 0 0 1 1 12z" fill="#34a853" />
          <path d="M12 12H1a6 6 0 0 1 11 0z" fill="#fbbc04" />
        </svg>
      </AppTile>
      <DockDivider />
      <AppTile aria-label="Files">
        <svg width="24" height="24" viewBox="0 0 24 24">
          <path d="M1 5h10l-2 12H1z" fill="#34a853" />
          <path d="M2 15L12 4l1 3-3 9z" fill="#fbbc04" />
          <path d="M1 20v-3c7 0 9-5 11-13h10v16z" fill="#4285f4" />
          <path d="M1 20v-4h6l-3 4z" fill="#2a56c6" />
        </svg>
      </AppTile>
      <AppTile $bg="#dd3a38" aria-label="Screen recorder">
        <svg width="24" height="24" viewBox="0 0 24 24" fill="none" stroke="#fff" strokeWidth="1.500">
          <rect x="4" y="9" width="12" height="9" rx="2" fill="#fff" />
          <path d="M17 12l4-2v7l-4-2zM6 8h8V5.500H8" fill="#fff" />
          <path d="M7 13.500h6" stroke="#dd3a38" strokeWidth="2" />
          <circle cx="2.500" cy="4.500" r=".5" />
        </svg>
      </AppTile>
      <AppTile aria-label="Player">
        <svg width="24" height="24" viewBox="0 0 24 24">
          <path d="M12 1l10 5.500v11L12 23 2 17.500v-11z" fill="#e0114f" />
          <path d="M12 5l6.500 3.500v7L12 19l-6.500-3.500v-7z" fill="none" stroke="#fff" strokeOpacity=".7" />
          <path d="M10 9v6l5-3z" fill="#fff" />
        </svg>
      </AppTile>
      <AppTile $bg="#bfbfbf" aria-label="All apps">
        <svg width="24" height="24" viewBox="0 0 24 24" fill="none" stroke="#fff" strokeWidth="2">
          <path d="M3 3h6v6H3zM15 3h6v6h-6zM3 15h6v6H3zM19.500 19.500L22 22" />
          <circle cx="17.500" cy="17.500" r="3" />
        </svg>
      </AppTile>
    </Apps>
    <SystemNav>
      <Slot $w={48} aria-label="Back">
        <Icon w={14} h={16}><path d="M10 2L4 8l6 6" /></Icon>
      </Slot>
      <Slot $w={48} aria-label="Home">
        <Icon w={14}><circle cx="7" cy="7" r="6" /></Icon>
      </Slot>
      <Slot $w={46} aria-label="Recent apps">
        <Icon w={12}><path d="M1 1.500h10M1 6h10M1 10.500h10" /></Icon>
      </Slot>
    </SystemNav>
  </Dock>
);

export default function App() {
  return (
    <Device>
      <GlobalStyle />
      <BrowserChrome />
      <ChartHeader />
      <Work>
        <DrawingToolbar />
        <Chart />
        <Widgets />
      </Work>
      <SystemDock />
      <PenHandle />
      <InkLayer />
      <EventFlag>
        <Icon w={20}>
          <circle cx="10" cy="10" r="8.500" />
          <path d="M12 5l-5 5.500h6L8 15" />
          <circle cx="16" cy="4" r="2.500" fill="#d0304a" stroke="#fff" />
        </Icon>
      </EventFlag>
      <EdgeHandle />
      <RecorderBar>
        <RecorderButton aria-label="Screenshot"><MdOutlineCameraAlt size={20} /></RecorderButton>
        <RecorderButton aria-label="Colours"><MdOutlinePalette size={20} /></RecorderButton>
        <RecorderButton aria-label="Undo stroke"><MdUndo size={20} /></RecorderButton>
        <RecorderButton aria-label="Clear">
          <Icon w={14} h={17} sw={2}>
            <path d="M1 2h12M2.500 5.500h9V15h-9z" />
          </Icon>
        </RecorderButton>
        <RecorderButton aria-label="Close"><MdClose size={19} /></RecorderButton>
      </RecorderBar>
    </Device>
  );
}
